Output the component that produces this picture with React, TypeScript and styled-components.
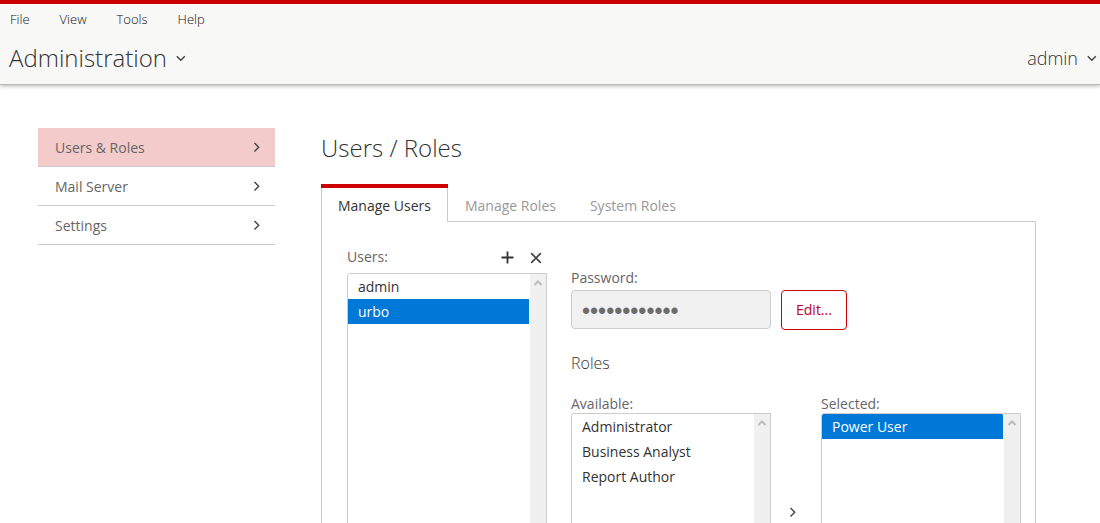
import React from "react";
import styled, { createGlobalStyle } from "styled-components";

const GlobalStyle = createGlobalStyle`
  *, *::before, *::after { box-sizing: border-box; }
  body {
    margin: 0;
    background: #fff;
    color: #333;
    font-family: "Open Sans", "Noto Sans", sans-serif;
    font-size: 14px;
    line-height: 19px;
  }
  button, input, select { font: inherit; color: inherit; }
  ul { list-style: none; margin: 0; padding: 0; }
`;

const Header = styled.header`
  border-top: 4px solid #c00;
  border-bottom: 1px solid #bbb;
  background: #f8f8f7;
  box-shadow: 0 1px 4px rgba(0, 0, 0, 0.3);
`;

const MenuBar = styled.nav`
  display: flex;
  gap: 30px;
  padding: 7px 10px 0;
`;

const PlainButton = styled.button`
  display: flex;
  align-items: center;
  border: 0;
  padding: 0;
  background: none;
  cursor: pointer;
`;

const MenuItem = styled(PlainButton)`
  color: #111;
  font-size: 13px;
  font-weight: 300;
  line-height: 17px;
`;

const TitleBar = styled.div`
  display: flex;
  align-items: center;
  justify-content: space-between;
  height: 56px;
  padding: 4px 2px 0 9px;
`;

const TitleButton = styled(PlainButton)<{ $size: number }>`
  gap: 8px;
  font-size: ${(p) => p.$size}px;
  font-weight: 300;
  line-height: 32px;
`;

const Page = styled.div`
  display: flex;
  align-items: flex-start;
  gap: 46px;
  padding: 43px 64px 40px 38px;
`;

const SideNav = styled.nav`
  flex: 0 0 237px;
`;

const SideLink = styled.a<{ $active?: boolean }>`
  display: flex;
  align-items: center;
  justify-content: space-between;
  height: 39px;
  padding: 0 12px 0 17px;
  border-bottom: 1px solid #ccc;
  background: ${(p) => (p.$active ? "#f4cbcb" : "transparent")};
  color: #666;
  text-decoration: none;
`;

const Main = styled.main`
  flex: 1;
  min-width: 0;
  padding-top: 4px;
`;

const PageTitle = styled.h1`
  margin: 0 0 20px;
  font-size: 24px;
  font-weight: 300;
  line-height: 32px;
`;

const Tabs = styled.div`
  display: flex;
  margin-bottom: -1px;
`;

const Tab = styled.button<{ $active?: boolean }>`
  position: relative;
  height: 38px;
  padding: 4px 16px 0;
  border: 1px solid ${(p) => (p.$active ? "#ccc" : "transparent")};
  border-width: 0 1px;
  background: ${(p) => (p.$active ? "#fff" : "transparent")};
  color: ${(p) => (p.$active ? "#333" : "#999")};
  cursor: pointer;

  &::before {
    content: "";
    position: absolute;
    top: 0;
    left: -1px;
    right: -1px;
    height: 4px;
    background: ${(p) => (p.$active ? "#c00" : "transparent")};
  }
`;

const Panel = styled.section`
  display: flex;
  align-items: flex-start;
  gap: 24px;
  border: 1px solid #ccc;
  padding: 25px 14px 24px 25px;
`;

const Column = styled.div`
  flex: 0 0 200px;
`;

const LabelRow = styled.div`
  display: flex;
  align-items: center;
  justify-content: space-between;
  padding: 0 5px 7px 0;
`;

const Label = styled.label`
  display: block;
  color: #666;
`;

const Actions = styled.div`
  display: flex;
  gap: 16px;
  padding-top: 2px;
`;

const ListFrame = styled.div<{ $height: number }>`
  display: flex;
  height: ${(p) => p.$height}px;
  border: 1px solid #ccc;
  border-radius: 3px 0 0 3px;
  overflow: hidden;
`;

const ListSelect = styled.select`
  flex: 1;
  min-width: 0;
  height: 100%;
  padding: 0;
  border: 0;
  outline: 0;
  background: #fff;
  scrollbar-width: none;

  option {
    height: 25px;
    padding: 3px 10px;
    line-height: 19px;
  }
  option:checked {
    background: #0078d7 linear-gradient(#0078d7, #0078d7);
    color: #fff;
    -webkit-text-fill-color: #fff;
  }
`;

const ScrollTrack = styled.div`
  display: flex;
  justify-content: center;
  flex: 0 0 16px;
  margin-left: 1px;
  padding: 3px 1px 0 0;
  background: #f0f0f0;
`;

const Details = styled.div`
  flex: 1;
  min-width: 0;
  padding-top: 21px;
`;

const PasswordRow = styled.div`
  display: flex;
  align-items: flex-start;
  gap: 10px;
  margin: 3px 0 22px;
`;

const PasswordInput = styled.input`
  width: 200px;
  height: 39px;
  padding: 4px 10px 0;
  border: 1px solid #ccc;
  border-radius: 4px;
  background: #f1f1f1;
  color: #6b6b6b;
  font-family: "Liberation Sans", sans-serif;
  font-size: 23px;
`;

const EditButton = styled.button`
  height: 40px;
  padding: 0 14px 2px;
  border: 1px solid #c00;
  border-radius: 4px;
  background: #fff;
  color: #c00025;
  cursor: pointer;
`;

const SectionTitle = styled.h2`
  margin: 0 0 20px;
  font-size: 16px;
  font-weight: 300;
  line-height: 22px;
`;

const RolesRow = styled.div`
  display: flex;
  align-items: flex-start;
`;

const Transfer = styled.div`
  display: flex;
  flex: 0 0 50px;
  flex-direction: column;
  align-items: center;
  gap: 24px;
  padding: 112px 6px 0 0;
`;

type Direction = "up" | "down" | "left" | "right";
const chevrons: Record<Direction, string> = {
  right: "M3.5 2 L7.7 6.3 L3.5 10.6",
  left: "M8.5 2 L4.3 6.3 L8.5 10.6",
  down: "M1.8 4.2 L5.8 8.2 L9.8 4.2",
  up: "M2.5 8 L6 4.5 L9.5 8",
};

const Chevron = ({ dir, color = "#444", weight = 1.4 }: { dir: Direction; color?: string; weight?: number }) => (
  <svg width="12" height="12" viewBox="0 0 12 12" fill="none" stroke={color} strokeWidth={weight} aria-hidden="true">
    <path d={chevrons[dir]} />
  </svg>
);

const ListBox = ({ id, height, items, selected }: { id: string; height: number; items: string[]; selected?: string }) => (
  <ListFrame $height={height}>
    <ListSelect id={id} multiple defaultValue={selected ? [selected] : []}>
      {items.map((item) => (
        <option key={item} value={item}>{item}</option>
      ))}
    </ListSelect>
    <ScrollTrack aria-hidden="true">
      <Chevron dir="up" color="#bbb" weight={2} />
    </ScrollTrack>
  </ListFrame>
);

const menu = ["File", "View", "Tools", "Help"];
const sections = ["Users & Roles", "Mail Server", "Settings"];
const tabs = ["Manage Users", "Manage Roles", "System Roles"];

export default function App() {
  return (
    <>
      <GlobalStyle />
      <Header>
        <MenuBar>
          {menu.map((name) => (
            <MenuItem key={name} type="button">{name}</MenuItem>
          ))}
        </MenuBar>
        <TitleBar>
          <TitleButton type="button" $size={24}>Administration<Chevron dir="down" /></TitleButton>
          <TitleButton type="button" $size={18}>admin<Chevron dir="down" /></TitleButton>
        </TitleBar>
      </Header>
      <Page>
        <SideNav>
          <ul>
            {sections.map((name, i) => (
              <li key={name}>
                <SideLink href="#" $active={i === 0}>{name}<Chevron dir="right" /></SideLink>
              </li>
            ))}
          </ul>
        </SideNav>
        <Main>
          <PageTitle>Users / Roles</PageTitle>
          <Tabs role="tablist">
            {tabs.map((name, i) => (
              <Tab key={name} type="button" role="tab" aria-selected={i === 0} $active={i === 0}>{name}</Tab>
            ))}
          </Tabs>
          <Panel>
            <Column>
              <LabelRow>
                <Label htmlFor="users">Users:</Label>
                <Actions>
                  <PlainButton type="button" aria-label="Add user">
                    <svg width="13" height="13" viewBox="0 0 13 13" stroke="#333" strokeWidth="1.8">
                      <path d="M6.5 0.5 V12.5 M0.5 6.5 H12.5" />
                    </svg>
                  </PlainButton>
                  <PlainButton type="button" aria-label="Delete user">
                    <svg width="12" height="12" viewBox="0 0 12 12" stroke="#444" strokeWidth="1.7">
                      <path d="M1.2 1.2 L10.8 10.8 M10.8 1.2 L1.2 10.8" />
                    </svg>
                  </PlainButton>
                </Actions>
              </LabelRow>
              <ListBox id="users" height={400} items={["admin", "urbo"]} selected="urbo" />
            </Column>
            <Details>
              <Label htmlFor="password">Password:</Label>
              <PasswordRow>
                <PasswordInput id="password" type="password" defaultValue="changeme1234" readOnly />
                <EditButton type="button">Edit...</EditButton>
              </PasswordRow>
              <SectionTitle>Roles</SectionTitle>
              <RolesRow>
                <Column>
                  <Label htmlFor="available">Available:</Label>
                  <ListBox id="available" height={260} items={["Administrator", "Business Analyst", "Report Author"]} />
                </Column>
                <Transfer>
                  <PlainButton type="button" aria-label="Add role"><Chevron dir="right" /></PlainButton>
                  <PlainButton type="button" aria-label="Remove role"><Chevron dir="left" /></PlainButton>
                </Transfer>
                <Column>
                  <Label htmlFor="selected">Selected:</Label>
                  <ListBox id="selected" height={260} items={["Power User"]} selected="Power User" />
                </Column>
              </RolesRow>
            </Details>
          </Panel>
        </Main>
      </Page>
    </>
  );
}
